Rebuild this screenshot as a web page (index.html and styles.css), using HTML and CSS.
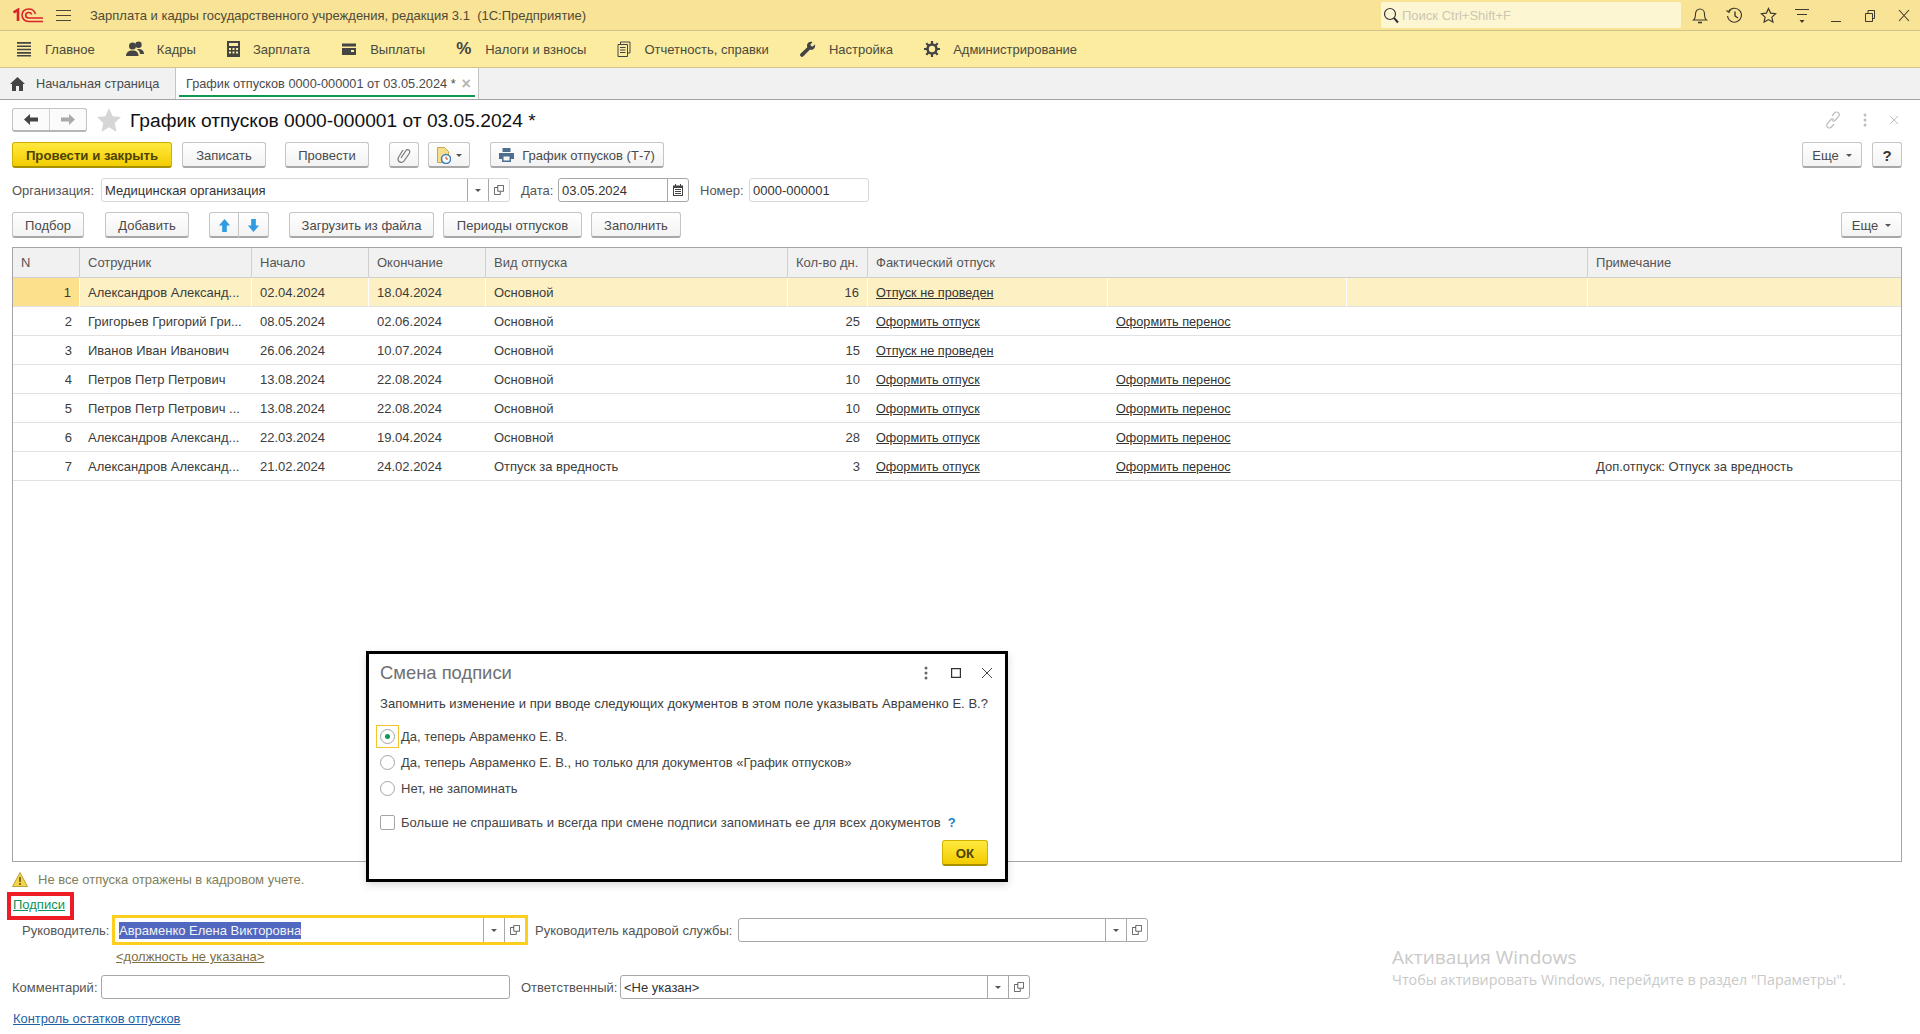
FILE: index.html
```html
<!DOCTYPE html>
<html lang="ru">
<head>
    <meta charset="UTF-8">
    <title>График отпусков 0000-000001 от 03.05.2024</title>
    <link rel="stylesheet" href="styles.css">
</head>
<body>
    <svg class="sprite" width="0" height="0">
        <symbol id="copy" viewBox="0 0 12 12"><path d="M4.5 .5h7v7h-7z M4.5 3H.5v8.5h7V8" fill="none" stroke="#444"/></symbol>
        <symbol id="up" viewBox="0 0 14 16"><path d="M7 1l6 7H9.500v7h-5V8H1z" fill="#2f9be0"/></symbol>
        <symbol id="down" viewBox="0 0 14 16"><path d="M7 15l6-7H9.500V1h-5v7H1z" fill="#2f9be0"/></symbol>
    </svg>

    <header class="title-bar">
        <svg class="logo" width="30" height="15" viewBox="0 0 30 15" fill="none" stroke="#d9232a">
            <path d="M.5 4.500L5 1.800V13" stroke-width="2.600"/>
            <path d="M22.500 6C21.500 2.800 19 1 15.800 1 11.800 1 9 3.500 9 7c0 3.800 2.800 6.500 6.500 6.500H30" stroke-width="1.600"/>
            <path d="M18.800 6.500C18.300 5.300 17.200 4.500 15.800 4.500 14 4.500 12.700 5.600 12.700 7.200c0 1.600 1.300 2.800 3.200 2.800H30" stroke-width="1.600"/>
        </svg>
        <svg class="burger" width="15" height="13" viewBox="0 0 15 13" stroke="#4a4636"><path d="M0 1.500h15M0 6.500h15M0 11.500h15"/></svg>
        <span class="app-name">Зарплата и кадры государственного учреждения, редакция 3.1&nbsp; (1С:Предприятие)</span>
        <div class="search">
            <svg width="16" height="17" viewBox="0 0 16 17" fill="none" stroke="#333"><circle cx="7" cy="7" r="5.500" stroke-width="1.200"/><path d="M11 11l4 4.500" stroke-width="2"/></svg>
            <span>Поиск Ctrl+Shift+F</span>
        </div>
        <div class="sys-icons">
            <svg width="16" height="17" viewBox="0 0 16 17" fill="none" stroke="#3d3a2c" stroke-width="1.100"><path d="M1.500 13c2-1.500 2-3 2-6 0-3 2-5 4.500-5s4.500 2 4.500 5c0 3 0 4.500 2 6z"/><path d="M6 15.500h4" stroke-width="1.600"/></svg>
            <svg width="17" height="17" viewBox="0 0 17 17" fill="none" stroke="#3d3a2c" stroke-width="1.100"><path d="M2.500 4.500A7 7 0 1 1 1.500 9"/><path d="M.5 3.500l2.500 2 1.500-3"/><path d="M9 4.500V9l3 2" stroke-width="1.400"/></svg>
            <svg width="17" height="17" viewBox="0 0 17 17" fill="none" stroke="#3d3a2c" stroke-width="1.200"><path d="M8.500 1.500l2.100 4.600 5 .6-3.700 3.400 1 5-4.400-2.500-4.400 2.500 1-5L1.400 6.700l5-.6z"/></svg>
            <svg width="16" height="17" viewBox="0 0 16 17" stroke="#3d3a2c"><path d="M1 2.500h14M3 7.500h10" fill="none"/><path d="M5.500 13h5L8 16z" fill="#3d3a2c" stroke="none"/></svg>
            <svg width="12" height="17" viewBox="0 0 12 17" stroke="#3d3a2c"><path d="M1 14.500h10"/></svg>
            <svg width="12" height="17" viewBox="0 0 12 17" fill="none" stroke="#3d3a2c"><path d="M1.500 6.500h7v8h-7z M4 6.500V3.500h6.500v8h-2"/></svg>
            <svg width="14" height="17" viewBox="0 0 14 17" stroke="#3d3a2c" stroke-width="1.100"><path d="M2 3l10 11M12 3L2 14"/></svg>
        </div>
    </header>

    <nav class="menu-bar">
        <a class="menu-item"><svg width="16" height="16" viewBox="0 0 16 16" stroke="#444" stroke-width="1.700"><path d="M1 2h14M1 5.500h14M1 9h14M1 12.500h14M1 15.500h14" transform="scale(1 .95)"/></svg>Главное</a>
        <a class="menu-item"><svg width="18" height="16" viewBox="0 0 18 16" fill="#444"><circle cx="6.500" cy="5" r="3.500"/><circle cx="12.500" cy="3.800" r="3.200"/><path d="M0 15c0-3.500 2.500-5.500 6.500-5.500s6 2 6 5.500z"/><path d="M12 8c3 0 6 1 6 5h-4c0-2-1-3.500-3-4.500z"/></svg>Кадры</a>
        <a class="menu-item"><svg width="13" height="16" viewBox="0 0 13 16" fill="#444"><path d="M0 0h13v16H0zM2 2v3h9V2zM2 7v2h2V7zm3.500 0v2h2V7zM9 7v2h2V7zM2 10.500v2h2v-2zm3.500 0v2h2v-2zm3.500 0v2h2v-2z" fill-rule="evenodd"/></svg>Зарплата</a>
        <a class="menu-item"><svg width="16" height="16" viewBox="0 0 16 16" fill="#444"><path d="M1 2.500h14v3H1zM1 7h14v7H1zM10 9v2h3V9z" fill-rule="evenodd"/></svg>Выплаты</a>
        <a class="menu-item"><span class="percent">%</span>Налоги и взносы</a>
        <a class="menu-item"><svg width="14" height="16" viewBox="0 0 14 16" fill="none" stroke="#444"><path d="M3.500 3.500V1h9.500v11h-2.500"/><path d="M1 3.500h9.500v12H1z"/><path d="M3 6.500h5.500M3 9h5.500M3 11.500h5.500"/></svg>Отчетность, справки</a>
        <a class="menu-item"><svg width="16" height="16" viewBox="0 0 16 16" fill="#444"><path d="M15 3.500l-2.800 2.300-2-1.800L12.500 1C10 0 7 1.500 7 4.500c0 .7.100 1.200.3 1.700L.7 12.500c-.9.900-.9 2 0 2.800.8.800 1.800.8 2.600 0l6.500-6.600c3 .8 6-1.700 5.200-5.200z"/></svg>Настройка</a>
        <a class="menu-item"><svg width="16" height="16" viewBox="0 0 16 16"><circle cx="8" cy="8" r="4.500" fill="none" stroke="#444" stroke-width="2.600"/><path d="M8 0v3M8 13v3M0 8h3M13 8h3M2.300 2.300l2.200 2.200M11.500 11.500l2.200 2.200M13.700 2.300l-2.200 2.200M4.500 11.500l-2.200 2.200" stroke="#444" stroke-width="2.200"/></svg>Администрирование</a>
    </nav>

    <div class="tabs">
        <div class="tab tab-home">
            <svg width="15" height="14" viewBox="0 0 15 14" fill="#444"><path d="M7.500 0L15 7h-2v7H9V9H6v5H2V7H0z"/></svg>
            Начальная страница
        </div>
        <div class="tab tab-active">График отпусков 0000-000001 от 03.05.2024 * <span class="tab-close">×</span></div>
    </div>

    <main class="page">
        <div class="doc-head">
            <div class="nav-group">
                <button class="nav-btn"><svg width="14" height="11" viewBox="0 0 14 11" fill="#444"><path d="M0 5.500L6 0v3.500h8v4H6V11z"/></svg></button>
                <button class="nav-btn"><svg width="14" height="11" viewBox="0 0 14 11" fill="#aaa"><path d="M14 5.500L8 0v3.500H0v4h8V11z"/></svg></button>
            </div>
            <svg class="fav" width="24" height="24" viewBox="0 0 24 24" fill="#d6d6d6"><path d="M12 0l3.600 8.300 8.400.8-6.300 5.900 1.800 9L12 19.300 4.500 24l1.800-9L0 9.100l8.400-.8z"/></svg>
            <h1 class="doc-title">График отпусков 0000-000001 от 03.05.2024 *</h1>
            <div class="doc-tools">
                <svg width="16" height="18" viewBox="0 0 16 18" fill="none" stroke="#bdbdbd" stroke-width="1.200"><path d="M7 5l2.500-3c1-1.200 2.700-1.300 3.800-.3s1.200 2.600.3 3.700L10.500 9c-1 1.200-2.500 1.200-3.500.4"/><path d="M9 13l-2.500 3c-1 1.200-2.700 1.300-3.800.3s-1.200-2.600-.3-3.700L5.500 9c1-1.200 2.500-1.200 3.500-.4"/></svg>
                <svg width="4" height="14" viewBox="0 0 4 14" fill="#bdbdbd"><circle cx="2" cy="2" r="1.500"/><circle cx="2" cy="7" r="1.500"/><circle cx="2" cy="12" r="1.500"/></svg>
                <svg width="10" height="10" viewBox="0 0 10 10" stroke="#bdbdbd"><path d="M1 1l8 8M9 1L1 9"/></svg>
            </div>
        </div>

        <div class="cmd-row">
            <button class="btn btn-main w-160">Провести и закрыть</button>
            <button class="btn w-84 ml-10">Записать</button>
            <button class="btn w-84 ml-19">Провести</button>
            <button class="btn w-30 ml-20">
                <svg width="14" height="17" viewBox="0 0 14 17" fill="none" stroke="#777" stroke-width="1.200"><path d="M4 11l5-7.500c1-1.500 3-1 3.500 0s.2 2-.3 3L7 14c-1 1.500-3.500 2-5 .5S1 11 2 9.500L6 3"/></svg>
            </button>
            <button class="btn w-42 ml-9 btn-drop">
                <svg width="14" height="17" viewBox="0 0 14 17"><path d="M.5.500h7l4 4v11H.5z" fill="#f6de8c" stroke="#c9a64a"/><circle cx="9" cy="12" r="4.500" fill="#fff" stroke="#3d7ebd" stroke-width="1.500"/><path d="M9 9.500V12h2" fill="none" stroke="#d9432a"/></svg>
                <i class="caret"></i>
            </button>
            <button class="btn btn-print w-174 ml-20">
                <svg width="15" height="14" viewBox="0 0 15 14" fill="#4d6f8f"><path d="M3.500 0h8v4h-8zM0 5h15v6h-3v3H3v-3H0zM4.500 8.500V12.500h6V8.500z" fill-rule="evenodd"/></svg>
                График отпусков (Т-7)
            </button>
            <button class="btn w-60 ml-auto">Еще <i class="caret"></i></button>
            <button class="btn w-30 ml-10 btn-help">?</button>
        </div>

        <div class="attr-row">
            <label class="lbl w-89">Организация:</label>
            <div class="field field-light w-409">
                <span class="field-text">Медицинская организация</span>
                <span class="field-btn"><i class="caret"></i></span>
                <span class="field-btn"><svg width="10" height="10"><use href="#copy"/></svg></span>
            </div>
            <label class="lbl ml-11 w-37">Дата:</label>
            <div class="field w-131">
                <span class="field-text">03.05.2024</span>
                <span class="field-btn"><svg width="10" height="12" viewBox="0 0 10 12" fill="#444"><path d="M0 1.500h2V0h1v1.500h4V0h1v1.500h2V12H0zM1 4v7h8V4zM2 5h6v1H2zm0 2h6v1H2zm0 2h6v1H2z" fill-rule="evenodd"/></svg></span>
            </div>
            <label class="lbl ml-11 w-49">Номер:</label>
            <div class="field field-light w-120"><span class="field-text">0000-000001</span></div>
        </div>

        <div class="cmd-row">
            <button class="btn w-72">Подбор</button>
            <button class="btn w-84 ml-21">Добавить</button>
            <div class="btn-group ml-20">
                <button class="btn w-30"><svg width="13" height="15"><use href="#up"/></svg></button>
                <button class="btn w-30"><svg width="13" height="15"><use href="#down"/></svg></button>
            </div>
            <button class="btn w-145 ml-20">Загрузить из файла</button>
            <button class="btn w-139 ml-9">Периоды отпусков</button>
            <button class="btn w-90 ml-9">Заполнить</button>
            <button class="btn w-61 ml-auto">Еще <i class="caret"></i></button>
        </div>

        <div class="grid-wrap">
            <table class="grid">
                <colgroup>
                    <col class="c-n"><col class="c-name"><col class="c-date"><col class="c-date"><col class="c-kind">
                    <col class="c-days"><col class="c-fact1"><col class="c-fact2"><col class="c-fact3"><col class="c-note">
                </colgroup>
                <thead>
                    <tr>
                        <th>N</th><th>Сотрудник</th><th>Начало</th><th>Окончание</th><th>Вид отпуска</th>
                        <th>Кол-во дн.</th><th colspan="3">Фактический отпуск</th><th>Примечание</th>
                    </tr>
                </thead>
                <tbody>
                    <tr class="current">
                        <td class="num">1</td><td>Александров Александ...</td><td>02.04.2024</td><td>18.04.2024</td><td>Основной</td>
                        <td class="num">16</td><td><a>Отпуск не проведен</a></td><td></td><td></td><td></td>
                    </tr>
                    <tr>
                        <td class="num">2</td><td>Григорьев Григорий Гри...</td><td>08.05.2024</td><td>02.06.2024</td><td>Основной</td>
                        <td class="num">25</td><td><a>Оформить отпуск</a></td><td><a>Оформить перенос</a></td><td></td><td></td>
                    </tr>
                    <tr>
                        <td class="num">3</td><td>Иванов Иван Иванович</td><td>26.06.2024</td><td>10.07.2024</td><td>Основной</td>
                        <td class="num">15</td><td><a>Отпуск не проведен</a></td><td></td><td></td><td></td>
                    </tr>
                    <tr>
                        <td class="num">4</td><td>Петров Петр Петрович</td><td>13.08.2024</td><td>22.08.2024</td><td>Основной</td>
                        <td class="num">10</td><td><a>Оформить отпуск</a></td><td><a>Оформить перенос</a></td><td></td><td></td>
                    </tr>
                    <tr>
                        <td class="num">5</td><td>Петров Петр Петрович ...</td><td>13.08.2024</td><td>22.08.2024</td><td>Основной</td>
                        <td class="num">10</td><td><a>Оформить отпуск</a></td><td><a>Оформить перенос</a></td><td></td><td></td>
                    </tr>
                    <tr>
                        <td class="num">6</td><td>Александров Александ...</td><td>22.03.2024</td><td>19.04.2024</td><td>Основной</td>
                        <td class="num">28</td><td><a>Оформить отпуск</a></td><td><a>Оформить перенос</a></td><td></td><td></td>
                    </tr>
                    <tr>
                        <td class="num">7</td><td>Александров Александ...</td><td>21.02.2024</td><td>24.02.2024</td><td>Отпуск за вредность</td>
                        <td class="num">3</td><td><a>Оформить отпуск</a></td><td><a>Оформить перенос</a></td><td></td><td>Доп.отпуск: Отпуск за вредность</td>
                    </tr>
                </tbody>
            </table>
        </div>

        <div class="warn-row">
            <svg width="16" height="15" viewBox="0 0 16 15"><path d="M8 .5l7.500 14H.5z" fill="#f3d44a" stroke="#b9a23c"/><path d="M8 5v5M8 11v2" stroke="#5a4d12" stroke-width="1.500"/></svg>
            Не все отпуска отражены в кадровом учете.
        </div>
        <div class="signs-row"><a class="signs-link">Подписи</a></div>
        <div class="sign-fields">
            <label class="lbl w-90">Руководитель:</label>
            <div class="field field-focus w-416">
                <span class="field-text"><span class="selected">Авраменко Елена Викторовна</span></span>
                <span class="field-btn"><i class="caret"></i></span>
                <span class="field-btn"><svg width="10" height="10"><use href="#copy"/></svg></span>
            </div>
            <label class="lbl ml-7 w-203">Руководитель кадровой службы:</label>
            <div class="field w-410">
                <span class="field-text"></span>
                <span class="field-btn"><i class="caret"></i></span>
                <span class="field-btn"><svg width="10" height="10"><use href="#copy"/></svg></span>
            </div>
        </div>
        <div class="post-row"><a class="post-link">&lt;должность не указана&gt;</a></div>
        <div class="attr-row comment-row">
            <label class="lbl w-89">Комментарий:</label>
            <div class="field w-409"><span class="field-text"></span></div>
            <label class="lbl ml-11 w-99">Ответственный:</label>
            <div class="field w-410">
                <span class="field-text">&lt;Не указан&gt;</span>
                <span class="field-btn"><i class="caret"></i></span>
                <span class="field-btn"><svg width="10" height="10"><use href="#copy"/></svg></span>
            </div>
        </div>
        <div class="control-row"><a class="control-link">Контроль остатков отпусков</a></div>
    </main>

    <!-- dialog over the form -->
    <section class="dialog">
        <div class="dialog-head">
            <h2>Смена подписи</h2>
            <svg width="4" height="14" viewBox="0 0 4 14" fill="#666"><circle cx="2" cy="2" r="1.500"/><circle cx="2" cy="7" r="1.500"/><circle cx="2" cy="12" r="1.500"/></svg>
            <svg class="dlg-max" width="10" height="10" viewBox="0 0 10 10" fill="none" stroke="#333" stroke-width="1.200"><path d="M.6.600h8.800v8.800H.6z"/></svg>
            <svg class="dlg-close" width="12" height="12" viewBox="0 0 12 12" stroke="#444"><path d="M1 1l10 10M11 1L1 11"/></svg>
        </div>
        <p class="dialog-question">Запомнить изменение и при вводе следующих документов в этом поле указывать Авраменко Е. В.?</p>
        <div class="radio-row"><span class="radio-box focus"><i class="radio on"></i></span>Да, теперь Авраменко Е. В.</div>
        <div class="radio-row"><span class="radio-box"><i class="radio"></i></span>Да, теперь Авраменко Е. В., но только для документов «График отпусков»</div>
        <div class="radio-row"><span class="radio-box"><i class="radio"></i></span>Нет, не запоминать</div>
        <div class="check-row"><i class="check"></i>Больше не спрашивать и всегда при смене подписи запоминать ее для всех документов <b class="hint">?</b></div>
        <div class="dialog-foot"><button class="btn btn-main btn-ok">ОК</button></div>
    </section>

    <div class="watermark">
        <div class="wm-title">Активация Windows</div>
        <div class="wm-text">Чтобы активировать Windows, перейдите в раздел "Параметры".</div>
    </div>
</body>
</html>
```

FILE: styles.css
```css
* {
    box-sizing: border-box;
}
html, body {
    margin: 0;
    height: 100%;
}
body {
    position: relative;
    width: 1920px;
    height: 1034px;
    overflow: hidden;
    background: #fff;
    font-family: "Liberation Sans", Arial, sans-serif;
    font-size: 13px;
    color: #4a4a4a;
}
.sprite {
    position: absolute;
}
a {
    cursor: pointer;
}
svg {
    flex: none;
    display: block;
}

/* top bars */
.title-bar {
    display: flex;
    align-items: center;
    height: 31px;
    padding-left: 13px;
    background: #f9e396;
    border-bottom: 1px solid #cfc187;
}
.logo {
    margin-right: 13px;
}
.burger {
    margin-right: 19px;
}
.app-name {
    flex: none;
    width: 1291px;
    color: #4f4a36;
}
.search {
    flex: none;
    display: flex;
    align-items: center;
    gap: 3px;
    width: 300px;
    height: 26px;
    padding-left: 2px;
    background: #fdf6d3;
    border-radius: 2px;
    color: #cbc7b2;
}
.sys-icons {
    flex: none;
    display: grid;
    grid-template-columns: repeat(7, 34px);
    justify-items: center;
    align-items: center;
    margin-left: 2px;
}
.menu-bar {
    display: flex;
    align-items: center;
    gap: 31.2px;
    height: 37px;
    padding-left: 16px;
    background: #fbeca0;
    border-bottom: 1px solid #d2c78e;
}
.menu-item {
    display: flex;
    align-items: center;
    gap: 13px;
    color: #4a4a3c;
}
.percent {
    width: 16px;
    font-size: 17px;
    font-weight: bold;
    color: #444;
}
.tabs {
    display: flex;
    height: 32px;
    font-size: 12.75px;
    background: #f1f1f1;
    border-bottom: 1px solid #a3a3a3;
}
.tab {
    display: flex;
    align-items: center;
    height: 31px;
}
.tab-home {
    gap: 11px;
    width: 176px;
    padding-left: 10px;
    border-right: 1px solid #c4c4c4;
}
.tab-active {
    position: relative;
    gap: 6px;
    width: 303px;
    padding-left: 10px;
    background: #fff;
    border-right: 1px solid #c4c4c4;
}
.tab-active::after {
    content: "";
    position: absolute;
    left: 3px;
    right: 3px;
    bottom: 2px;
    height: 2px;
    background: #0d9a50;
}
.tab-close {
    font-size: 16px;
    font-weight: bold;
    color: #b5b5b5;
}

/* form */
.page {
    padding: 8px 18px 0 12px;
}
.doc-head {
    display: flex;
    align-items: center;
    height: 24px;
}
.nav-group {
    display: flex;
    width: 75px;
    height: 24px;
    background: #fbfbfb;
    border: 1px solid #c3c3c3;
    border-bottom: 2px solid #b5b5b5;
    border-radius: 3px;
}
.nav-btn {
    flex: 1;
    display: flex;
    align-items: center;
    justify-content: center;
    padding: 0;
    background: none;
    border: none;
}
.nav-btn + .nav-btn {
    border-left: 1px solid #d0d0d0;
}
.fav {
    margin-left: 10px;
}
.doc-title {
    margin: 1px 0 0 9px;
    font-size: 19.2px;
    font-weight: normal;
    color: #111;
}
.doc-tools {
    display: flex;
    align-items: center;
    gap: 22px;
    margin-left: auto;
    padding-right: 3px;
}
.cmd-row {
    display: flex;
    align-items: center;
    height: 26px;
    margin-top: 10px;
}
.btn {
    display: flex;
    align-items: center;
    justify-content: center;
    gap: 7px;
    height: 26px;
    padding: 1px 0 0;
    font: inherit;
    color: #4a4a4a;
    background: linear-gradient(#fff, #f3f3f3);
    border: 1px solid #c5c5c5;
    border-bottom: 2px solid #a8a8a8;
    border-radius: 3px;
}
.btn-main {
    font-size: 13.2px;
    font-weight: bold;
    color: #4d4300;
    background: linear-gradient(#ffe93f, #f3cc00);
    border-color: #d2b000;
    border-bottom-color: #a89100;
}
.btn-drop {
    gap: 5px;
}
.btn-print {
    gap: 8px;
}
.btn-help {
    font-size: 15px;
    font-weight: bold;
    color: #333;
}
.btn-group {
    display: flex;
}
.btn-group .btn:first-child {
    border-radius: 3px 0 0 3px;
}
.btn-group .btn:last-child {
    border-left: none;
    border-radius: 0 3px 3px 0;
}
.caret {
    display: inline-block;
    border-top: 3px solid #555;
    border-left: 3px solid transparent;
    border-right: 3px solid transparent;
}
.attr-row {
    display: flex;
    align-items: center;
    height: 24px;
    margin-top: 10px;
}
.lbl {
    flex: none;
    white-space: nowrap;
    color: #555;
}
.field {
    flex: none;
    display: flex;
    height: 24px;
    background: #fff;
    border: 1px solid #a8a8a8;
    border-radius: 3px;
}
.field-light {
    border-color: #d8d8d8;
}
.field-focus {
    height: 30px;
    border: 3px solid #fccf1f;
    border-radius: 0;
}
.field-text {
    flex: 1;
    display: flex;
    align-items: center;
    padding-left: 3px;
    color: #333;
}
.field-btn {
    flex: none;
    display: flex;
    align-items: center;
    justify-content: center;
    width: 21px;
    border-left: 1px solid #a8a8a8;
}
.field-focus .field-text {
    padding-left: 4px;
}
.selected {
    padding: 1px 0;
    background: #5168c0;
    color: #f4f4f4;
}

/* table */
.grid-wrap {
    height: 615px;
    margin-top: 9px;
    border: 1px solid #a5a5a5;
}
.grid {
    width: 1888px;
    table-layout: fixed;
    border-collapse: separate;
    border-spacing: 0;
}
.c-n { width: 67px; }
.c-name { width: 172px; }
.c-date { width: 117px; }
.c-kind { width: 302px; }
.c-days { width: 80px; }
.c-fact1 { width: 240px; }
.c-fact2 { width: 239px; }
.c-fact3 { width: 241px; }
.c-note { width: 313px; }
.grid th {
    height: 30px;
    padding: 0 8px;
    font-weight: normal;
    text-align: left;
    white-space: nowrap;
    color: #555;
    background: #f1f1f1;
    border-right: 1px solid #d0d0d0;
    border-bottom: 1px solid #cfcfcf;
}
.grid th:last-child, .grid td:last-child {
    border-right: none;
}
.grid td {
    height: 29px;
    padding: 1px 8px 0;
    white-space: nowrap;
    overflow: hidden;
    color: #3c3c3c;
    border-bottom: 1px solid #e2e2e2;
}
.grid td.num {
    text-align: right;
}
.grid a {
    font-size: 12.7px;
    color: #333;
    text-decoration: underline;
}
.current td {
    background: #fdf0c3;
    border-right: 1px solid #fff;
}
.current td:first-child {
    background: #fde08c;
}

/* bottom of the form */
.warn-row {
    display: flex;
    align-items: center;
    gap: 10px;
    height: 18px;
    margin-top: 8px;
    color: #80805a;
}
.signs-row {
    height: 20px;
    margin-top: 7px;
    padding-top: 1px;
}
.signs-link {
    display: inline-block;
    height: 20px;
    margin-left: -1px;
    padding: 1px 5px 1px 2px;
    color: #0a9458;
    text-decoration: underline;
    outline: 4px solid #ee1c25;
}
.sign-fields {
    display: flex;
    align-items: center;
    height: 30px;
    padding-left: 10px;
}
.post-row {
    height: 18px;
    margin-top: 4px;
    padding-left: 104px;
}
.post-link {
    color: #7f6e3e;
    text-decoration: underline;
}
.comment-row {
    margin-top: 8px;
}
.control-row {
    height: 18px;
    margin-top: 12px;
    padding-left: 1px;
}
.control-link {
    font-size: 12.9px;
    color: #1d5fa8;
    text-decoration: underline;
}

/* dialog */
.dialog {
    position: absolute;
    left: 366px;
    top: 651px;
    width: 642px;
    height: 231px;
    padding: 9px 17px 0 11px;
    background: #fff;
    border: 3px solid #000;
    box-shadow: 0 3px 8px rgba(0, 0, 0, 0.15);
    color: #444;
}
.dialog-head {
    display: flex;
    align-items: center;
    height: 20px;
    margin-right: -5px;
}
.dialog-head h2 {
    flex: 1;
    margin: 0;
    font-size: 18.4px;
    font-weight: normal;
    color: #707070;
}
.dlg-max {
    margin-left: 23px;
}
.dlg-close {
    margin-left: 20px;
}
.dialog-question {
    height: 18px;
    margin: 12px 0 0;
    line-height: 18px;
    white-space: nowrap;
    letter-spacing: 0.03px;
    color: #3c3c3c;
}
.radio-row {
    display: flex;
    align-items: center;
    height: 26px;
}
.dialog-question + .radio-row {
    margin-top: 10px;
}
.radio-box {
    display: flex;
    align-items: center;
    justify-content: center;
    width: 23px;
    height: 23px;
    margin: 0 2px 0 -4px;
    border: 1px solid transparent;
}
.radio-box.focus {
    border-color: #f4c430;
}
.radio {
    position: relative;
    width: 15px;
    height: 15px;
    background: #fff;
    border: 1px solid #a5a5a5;
    border-radius: 50%;
}
.radio.on::after {
    content: "";
    position: absolute;
    left: 4px;
    top: 4px;
    width: 5px;
    height: 5px;
    background: #0d9a50;
    border-radius: 50%;
}
.check-row {
    display: flex;
    align-items: center;
    gap: 6px;
    height: 26px;
    margin-top: 8px;
    letter-spacing: 0.04px;
}
.check {
    width: 15px;
    height: 15px;
    border: 1px solid #a5a5a5;
    border-radius: 2px;
}
.hint {
    margin-left: 1px;
    color: #1d7fc4;
}
.dialog-foot {
    display: flex;
    justify-content: flex-end;
    margin-top: 5px;
}
.btn-ok {
    width: 46px;
}
.watermark {
    position: absolute;
    left: 1392px;
    top: 944px;
    font-family: "Open Sans", sans-serif;
    color: #c9c9c9;
}
.wm-title {
    font-size: 19px;
    line-height: 26px;
}
.wm-text {
    margin-top: 1px;
    font-size: 14.28px;
    line-height: 18px;
}

/* sizes and gaps */
.w-30 { width: 30px; }
.w-37 { width: 37px; }
.w-42 { width: 42px; }
.w-49 { width: 49px; }
.w-60 { width: 60px; }
.w-61 { width: 61px; }
.w-72 { width: 72px; }
.w-84 { width: 84px; }
.w-89 { width: 89px; }
.w-90 { width: 90px; }
.w-99 { width: 99px; }
.w-120 { width: 120px; }
.w-131 { width: 131px; }
.w-139 { width: 139px; }
.w-145 { width: 145px; }
.w-160 { width: 160px; }
.w-174 { width: 174px; }
.w-203 { width: 203px; }
.w-409 { width: 409px; }
.w-410 { width: 410px; }
.w-416 { width: 416px; }
.ml-7 { margin-left: 7px; }
.ml-9 { margin-left: 9px; }
.ml-10 { margin-left: 10px; }
.ml-11 { margin-left: 11px; }
.ml-19 { margin-left: 19px; }
.ml-20 { margin-left: 20px; }
.ml-21 { margin-left: 21px; }
.ml-auto { margin-left: auto; }
```
